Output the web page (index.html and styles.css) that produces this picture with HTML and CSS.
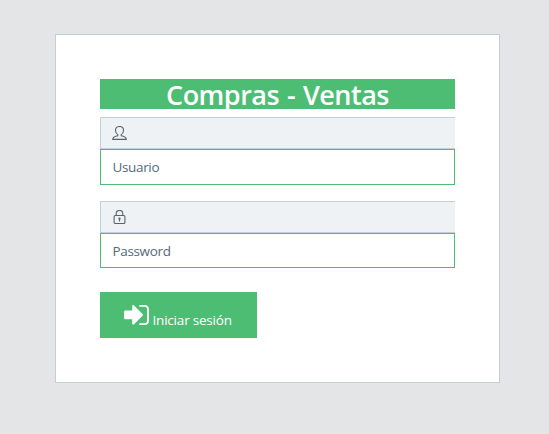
FILE: index.html
```html
<!DOCTYPE html>
<html lang="es">
<head>
<meta charset="utf-8">
<title>Compras - Ventas</title>
<link rel="stylesheet" href="styles.css">
</head>
<body>
<main class="card">
  <h1 class="title">Compras - Ventas</h1>
  <form>
    <div class="field user">
      <span class="addon"><svg class="icon" viewBox="0 0 15 14"><path d="M5.8 8.6C4.3 7.7 3.5 6.1 3.5 4.2 3.5 2 5.2.5 7.5.5s4 1.5 4 3.7c0 1.9-.8 3.5-2.3 4.4v1.1c1.8.7 5.1 1 5.1 3.7H.7c0-2.7 3.3-3 5.1-3.7z"/></svg></span>
      <input class="input" type="text" placeholder="Usuario">
    </div>
    <div class="field password">
      <span class="addon"><svg class="icon" viewBox="0 0 15 14"><rect x="2.1" y="5.5" width="10.8" height="8" rx="1.2"/><path d="M4.2 5.5V3.7C4.2 1.8 5.5.5 7.5.5s3.3 1.3 3.3 3.2v1.8M7.5 9v2.5"/><circle cx="7.5" cy="8.7" r=".6"/></svg></span>
      <input class="input" type="password" placeholder="Password">
    </div>
    <button class="submit" type="button"><svg class="enter" viewBox="0 0 25 22"><path class="arrow" d="M1.4 6.5h6.8V2.2c0-1.1 1.1-1.6 1.9-.8l8.4 8.5c.6.6.6 1.3 0 1.9l-8.4 8.5c-.8.8-1.9.3-1.9-.8v-4.3H1.4c-.8 0-1.3-.5-1.3-1.3V7.8c0-.8.5-1.3 1.3-1.3z"/><path class="door" d="M16 1.9h4.4c2.2 0 3.6 1.4 3.6 3.6v11c0 2.2-1.4 3.6-3.6 3.6H16"/></svg><span class="label">Iniciar sesión</span></button>
  </form>
</main>
</body>
</html>
```
FILE: styles.css
```css
* { box-sizing: border-box; }
body {
  margin: 0;
  height: 434px;
  padding: 34px 49px 0 55px;
  overflow: hidden;
  background: #e4e5e6;
  font-family: "Open Sans", "Noto Sans", sans-serif;
}
.card {
  width: 445px;
  height: 349px;
  padding: 44px;
  background: #fff;
  border: 1px solid #c2cfd6;
}
.title {
  margin: 0 0 8px;
  height: 30px;
  line-height: 32px;
  background: #4dbd74;
  color: #fff;
  font-size: 27px;
  font-weight: 600;
  letter-spacing: -0.5px;
  word-spacing: 1.3px;
  text-align: center;
}
.addon {
  display: flex;
  align-items: center;
  height: 32px;
  padding-left: 11px;
  background: #eef2f5;
  border: 1px solid #c2cfd6;
  border-right: 0;
}
.icon {
  width: 15px;
  height: 14px;
  fill: none;
  stroke: #5a636b;
  stroke-width: 1.1;
}
.input {
  display: block;
  width: 100%;
  height: 36px;
  padding: 0 11.5px;
  border: 1px solid #4dbd74;
  border-radius: 0;
  background: #fff;
  font: 13.5px "Open Sans", "Noto Sans", sans-serif;
  letter-spacing: -0.35px;
}
.input::placeholder { color: #536c79; opacity: 1; }
.user { margin-bottom: 16px; }
.password { margin-bottom: 24px; }
.password .input { height: 35px; }
.submit {
  display: flex;
  align-items: flex-start;
  width: 157px;
  height: 46px;
  padding: 12px 0 0 24px;
  border: 0;
  background: #4dbd74;
  color: #fff;
  font: 13.5px/20px "Open Sans", "Noto Sans", sans-serif;
  letter-spacing: -0.2px;
}
.enter { width: 25px; height: 22px; }
.arrow { fill: #fff; }
.door { fill: none; stroke: #fff; stroke-width: 1.9; stroke-linecap: round; }
.label { margin: 6px 0 0 3.5px; white-space: nowrap; }
```
